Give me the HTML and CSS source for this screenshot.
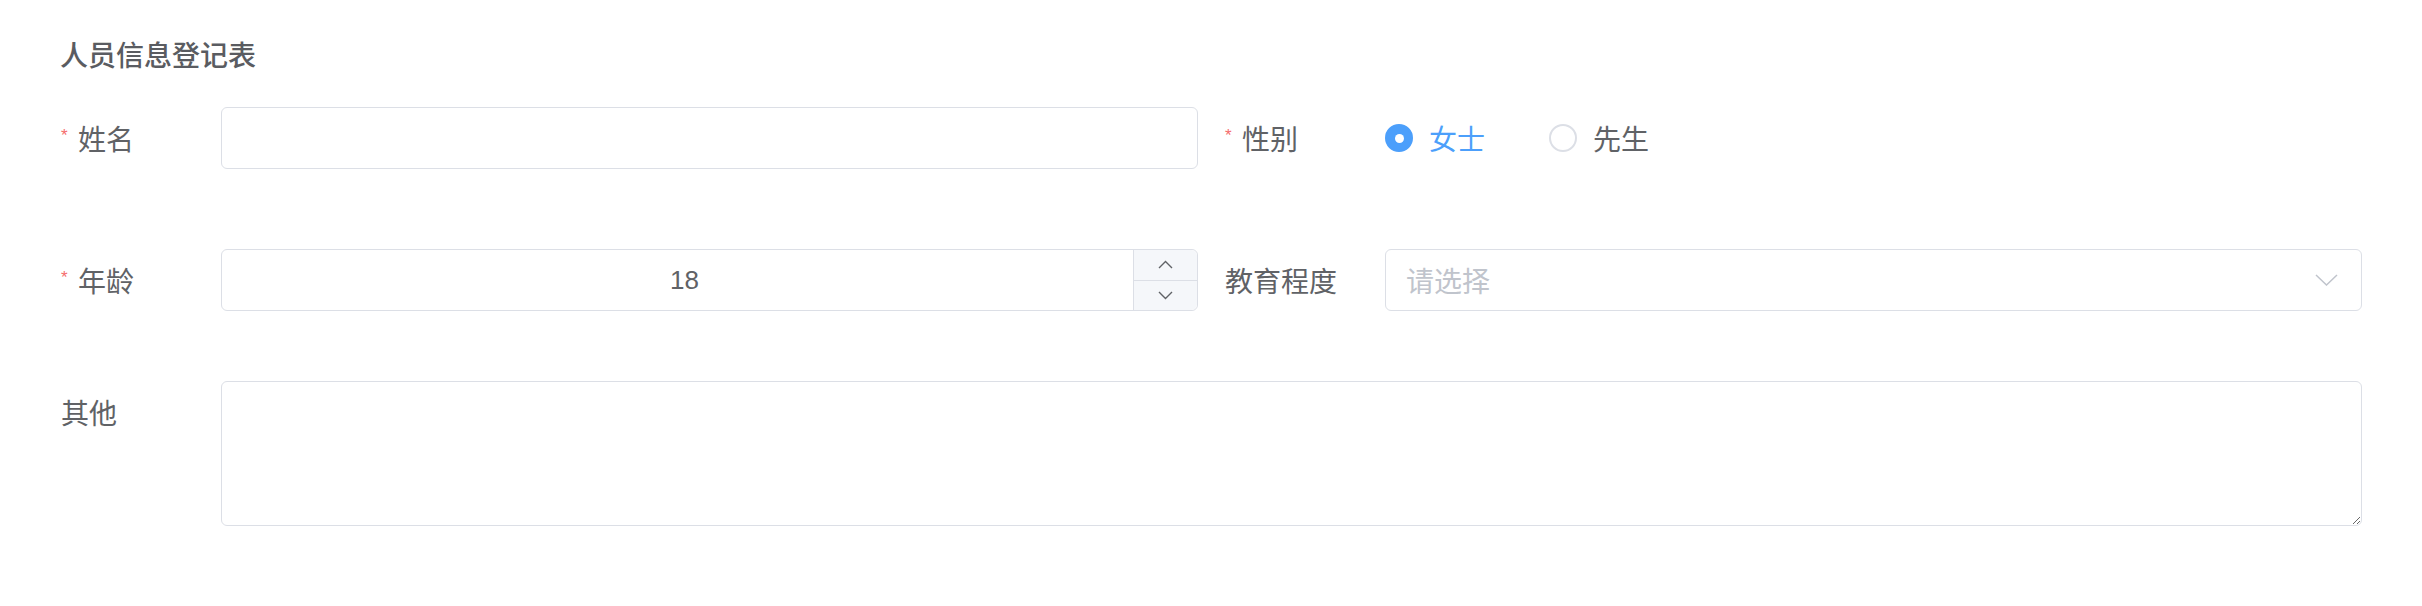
FILE: index.html
```html
<!DOCTYPE html>
<html lang="zh-CN">
<head>
<meta charset="utf-8">
<title>人员信息登记表</title>
<link rel="stylesheet" href="styles.css">
</head>
<body>
<div class="page">
  <h3 class="title">人员信息登记表</h3>
  <form class="form">
    <div class="row row-1">
      <div class="item">
        <label class="label"><span class="star">*</span>姓名</label>
        <div class="control"><input class="input" type="text"></div>
      </div>
      <div class="item">
        <label class="label"><span class="star">*</span>性别</label>
        <div class="control radios">
          <label class="radio checked"><span class="dot"></span><span class="radio-text">女士</span></label>
          <label class="radio"><span class="dot"></span><span class="radio-text">先生</span></label>
        </div>
      </div>
    </div>
    <div class="row row-2">
      <div class="item">
        <label class="label"><span class="star">*</span>年龄</label>
        <div class="control">
          <div class="number">
            <div class="number-value">18</div>
            <div class="spinner">
              <span class="spin-btn">
                <svg width="15" height="9" viewBox="0 0 15 9"><path d="M1 8 L7.5 1.5 L14 8" fill="none" stroke="#606266" stroke-width="1.4"/></svg>
              </span>
              <span class="spin-btn">
                <svg width="15" height="9" viewBox="0 0 15 9"><path d="M1 1 L7.5 7.5 L14 1" fill="none" stroke="#606266" stroke-width="1.4"/></svg>
              </span>
            </div>
          </div>
        </div>
      </div>
      <div class="item">
        <label class="label">教育程度</label>
        <div class="control">
          <div class="select">
            <span class="placeholder">请选择</span>
            <svg class="chevron" width="23" height="12" viewBox="0 0 23 12"><path d="M1 1 L11.5 11 L22 1" fill="none" stroke="#c0c4cc" stroke-width="1.5"/></svg>
          </div>
        </div>
      </div>
    </div>
    <div class="row row-3">
      <div class="item item-wide">
        <label class="label">其他</label>
        <div class="control"><textarea class="textarea"></textarea></div>
      </div>
    </div>
  </form>
</div>
</body>
</html>
```

FILE: styles.css
```css
* { box-sizing: border-box; }
html, body { margin: 0; padding: 0; background: #ffffff; }
body {
  font-family: "Noto Sans CJK SC", "Liberation Sans", sans-serif;
  color: #606266;
}
.page {
  padding: 34px 60px 0 60px;
}
.title {
  margin: 0;
  font-size: 28px;
  line-height: 40px;
  font-weight: 500;
  color: #5a5c61;
}
.form { margin-top: 33px; }
.row {
  display: grid;
  grid-template-columns: 1fr 1fr;
  column-gap: 26px;
}
.row-2 { margin-top: 80px; }
.row-3 { margin-top: 70px; grid-template-columns: 1fr; }
.item {
  display: flex;
  align-items: flex-start;
}
.label {
  flex: 0 0 161px;
  height: 62px;
  display: flex;
  align-items: center;
  font-size: 28px;
  color: #606266;
  padding-left: 1px;
}
.star {
  display: inline-block;
  width: 17px;
  align-self: flex-start;
  margin-top: 20px;
  font-family: "Liberation Sans", sans-serif;
  font-size: 17px;
  line-height: 17px;
  color: #f56c6c;
}
.control { flex: 1 1 auto; min-width: 0; }
.input, .number, .select, .textarea {
  display: block;
  width: 100%;
  border: 1.5px solid #dcdfe6;
  border-radius: 6px;
  background: #fff;
}
.input { height: 62px; outline: none; }
.radios {
  height: 62px;
  display: flex;
  align-items: center;
}
.radio {
  display: flex;
  align-items: center;
  margin-right: 64px;
  font-size: 28px;
  color: #606266;
}
.dot {
  width: 28px;
  height: 28px;
  border-radius: 50%;
  border: 2px solid #dcdfe6;
  background: #fff;
  margin-right: 16px;
  display: flex;
  align-items: center;
  justify-content: center;
}
.radio.checked .dot {
  border-color: #4c9ffb;
  background: #4c9ffb;
}
.radio.checked .dot::after {
  content: "";
  width: 9px;
  height: 9px;
  border-radius: 50%;
  background: #fff;
}
.radio.checked .radio-text { color: #4c9ffb; }
.number {
  height: 62px;
  display: flex;
}
.number-value {
  flex: 1 1 auto;
  display: flex;
  align-items: center;
  justify-content: center;
  font-family: "Liberation Sans", sans-serif;
  font-size: 26px;
  color: #606266;
  padding-left: 14px;
}
.spinner {
  flex: 0 0 64px;
  display: flex;
  flex-direction: column;
  border-left: 1.5px solid #dcdfe6;
  background: #f5f7fa;
  border-radius: 0 6px 6px 0;
}
.spin-btn {
  flex: 1 1 0;
  display: flex;
  align-items: center;
  justify-content: center;
}
.spin-btn + .spin-btn { border-top: 1.5px solid #dcdfe6; }
.select {
  height: 62px;
  display: flex;
  align-items: center;
  justify-content: space-between;
  padding: 0 23px 0 20px;
}
.placeholder {
  font-size: 28px;
  color: #c0c4cc;
}
.textarea {
  height: 145px;
  resize: vertical;
  outline: none;
  font-family: inherit;
}
```
